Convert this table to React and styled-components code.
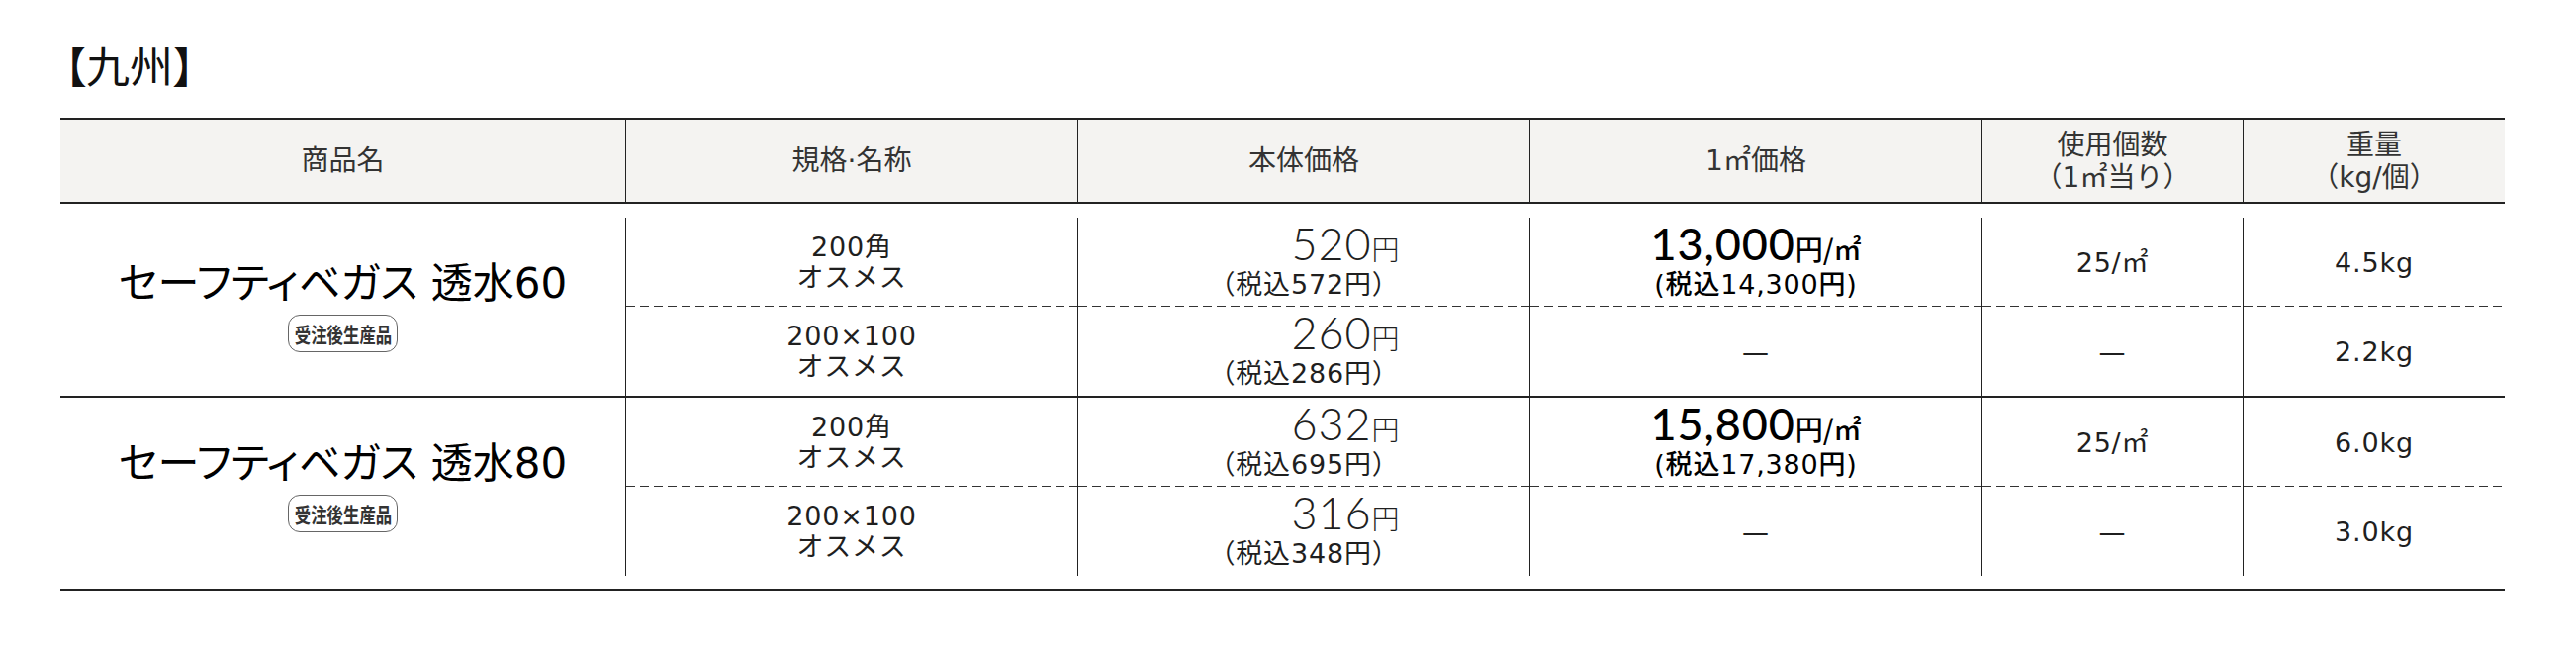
import React from 'react'
import styled, { createGlobalStyle, css } from 'styled-components'

const GlobalStyle = createGlobalStyle`
  body {
    margin: 0;
    background: #fff;
    color: #1f1f1f;
    font-family: "DejaVu Sans", "Noto Sans CJK JP", sans-serif;
  }
`

const COLUMNS = '571px 457px 457px 457px 264px 265px'
const LINE = '#222'

const Page = styled.div`
  padding: 39px 0 40px 61px;
`

const Title = styled.h2`
  margin: 0 0 28px 4px;
  font-family: "Noto Sans CJK JP", sans-serif;
  font-size: 44px;
  line-height: 52px;
  font-weight: 400;
  font-feature-settings: "palt";
  color: #111;
`

const Table = styled.div`
  width: 2471px;
`

const HeadRow = styled.div`
  display: grid;
  grid-template-columns: ${COLUMNS};
  height: 87px;
  box-sizing: border-box;
  border-top: 2px solid ${LINE};
  border-bottom: 2px solid ${LINE};
  background: #f4f3f1;
`

const HeadCell = styled.div`
  display: flex;
  flex-direction: column;
  align-items: center;
  justify-content: center;
  text-align: center;
  font-size: 28px;
  line-height: 33px;
  color: #333;
  border-left: 1px solid ${LINE};

  &:first-child {
    border-left: none;
  }
`

const Body = styled.div`
  padding: 14px 0 13px;
  border-bottom: 2px solid ${LINE};
`

const Group = styled.div`
  display: grid;
  grid-template-columns: ${COLUMNS};
  grid-template-rows: 90px 90px;

  & + & {
    border-top: 2px solid ${LINE};
  }
`

const NameCell = styled.div`
  grid-row: span 2;
  display: flex;
  flex-direction: column;
  align-items: center;
  justify-content: center;
`

const Name = styled.div`
  font-size: 42px;
  line-height: 46px;
  color: #000;
  font-feature-settings: "palt";
`

const Badge = styled.span`
  margin-top: 8px;
  display: inline-flex;
  align-items: center;
  justify-content: center;
  width: 111px;
  height: 38px;
  box-sizing: border-box;
  border: 1.5px solid #666;
  border-radius: 12px;
  font-family: "Noto Sans CJK JP", sans-serif;
  font-size: 21px;
  font-weight: 700;
  white-space: nowrap;
  color: #333;
`

/* the label is set in a condensed face in the original */
const BadgeText = styled.span`
  display: inline-block;
  transform: scaleX(0.78);
`

const Cell = styled.div`
  display: flex;
  flex-direction: column;
  align-items: center;
  justify-content: center;
  text-align: center;
  border-left: 1px solid ${LINE};
  font-size: 27px;
  line-height: 31px;
  letter-spacing: 0.03em;

  ${p => p.$dashed && css`
    background: linear-gradient(to right, #333 9px, transparent 9px) left bottom / 14px 1px repeat-x;
  `}
`

const PriceBlock = styled.div`
  display: flex;
  flex-direction: column;
  align-items: ${p => (p.$center ? 'center' : 'flex-end')};
  font-weight: ${p => (p.$strong ? 500 : 400)};
  color: ${p => (p.$strong ? '#000' : 'inherit')};
`

const BigLine = styled.div`
  font-family: Lato, "Noto Sans CJK JP", sans-serif;
  font-size: 45px;
  line-height: 46px;
  font-weight: ${p => (p.$strong ? 500 : 300)};
  letter-spacing: 0.02em;
`

const Unit = styled.span`
  font-family: "Noto Sans CJK JP", sans-serif;
  font-size: 28px;
  line-height: 1;
  letter-spacing: 0;
`

const TaxLine = styled.div`
  font-size: 27px;
  line-height: 38px;
`

const headers = [
  ['商品名'],
  ['規格·名称'],
  ['本体価格'],
  ['1㎡価格'],
  ['使用個数', '（1㎡当り）'],
  ['重量', '（kg/個）'],
]

const products = [
  {
    name: 'セーフティベガス 透水60',
    rows: [
      { spec: ['200角', 'オスメス'], price: '520', tax: '572', sqm: ['13,000', '14,300'], count: '25/㎡', weight: '4.5kg' },
      { spec: ['200×100', 'オスメス'], price: '260', tax: '286', sqm: null, count: null, weight: '2.2kg' },
    ],
  },
  {
    name: 'セーフティベガス 透水80',
    rows: [
      { spec: ['200角', 'オスメス'], price: '632', tax: '695', sqm: ['15,800', '17,380'], count: '25/㎡', weight: '6.0kg' },
      { spec: ['200×100', 'オスメス'], price: '316', tax: '348', sqm: null, count: null, weight: '3.0kg' },
    ],
  },
]

function VariantCells({ row, dashed }) {
  return (
    <>
      <Cell $dashed={dashed}>
        {row.spec.map(line => <div key={line}>{line}</div>)}
      </Cell>
      <Cell $dashed={dashed}>
        <PriceBlock>
          <BigLine>{row.price}<Unit>円</Unit></BigLine>
          <TaxLine>（税込{row.tax}円）</TaxLine>
        </PriceBlock>
      </Cell>
      <Cell $dashed={dashed}>
        {row.sqm ? (
          <PriceBlock $center $strong>
            <BigLine $strong>{row.sqm[0]}<Unit>円/㎡</Unit></BigLine>
            <TaxLine>(税込{row.sqm[1]}円)</TaxLine>
          </PriceBlock>
        ) : '—'}
      </Cell>
      <Cell $dashed={dashed}>{row.count || '—'}</Cell>
      <Cell $dashed={dashed}>{row.weight}</Cell>
    </>
  )
}

export default function App() {
  return (
    <Page>
      <GlobalStyle />
      <Title>【九州】</Title>
      <Table>
        <HeadRow>
          {headers.map(lines => (
            <HeadCell key={lines[0]}>
              {lines.map(line => <div key={line}>{line}</div>)}
            </HeadCell>
          ))}
        </HeadRow>
        <Body>
          {products.map(product => (
            <Group key={product.name}>
              <NameCell>
                <Name>{product.name}</Name>
                <Badge><BadgeText>受注後生産品</BadgeText></Badge>
              </NameCell>
              {product.rows.map((row, i) => (
                <VariantCells key={i} row={row} dashed={i === 0} />
              ))}
            </Group>
          ))}
        </Body>
      </Table>
    </Page>
  )
}
